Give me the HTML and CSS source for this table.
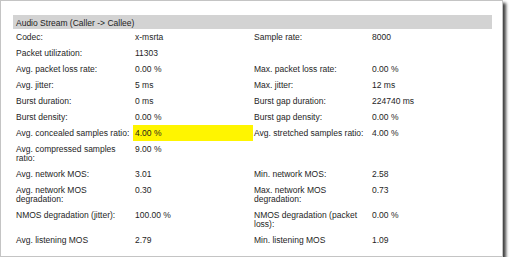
FILE: index.html
```html
<!DOCTYPE html>
<html>
<head>
<meta charset="utf-8">
<link rel="stylesheet" href="styles.css">
</head>
<body>
<div class="frame">
  <table class="stats">
    <colgroup>
      <col class="c1"><col class="c2"><col class="c3"><col class="c4">
    </colgroup>
    <tr class="head"><td colspan="4">Audio Stream (Caller -&gt; Callee)</td></tr>
    <tr><td>Codec:</td><td>x-msrta</td><td>Sample rate:</td><td>8000</td></tr>
    <tr><td>Packet utilization:</td><td>11303</td><td></td><td></td></tr>
    <tr><td>Avg. packet loss rate:</td><td>0.00 %</td><td>Max. packet loss rate:</td><td>0.00 %</td></tr>
    <tr><td>Avg. jitter:</td><td>5 ms</td><td>Max. jitter:</td><td>12 ms</td></tr>
    <tr><td>Burst duration:</td><td>0 ms</td><td>Burst gap duration:</td><td>224740 ms</td></tr>
    <tr><td>Burst density:</td><td>0.00 %</td><td>Burst gap density:</td><td>0.00 %</td></tr>
    <tr><td>Avg. concealed samples ratio:</td><td class="hl">4.00 %</td><td>Avg. stretched samples ratio:</td><td>4.00 %</td></tr>
    <tr><td>Avg. compressed samples ratio:</td><td>9.00 %</td><td></td><td></td></tr>
    <tr><td>Avg. network MOS:</td><td>3.01</td><td>Min. network MOS:</td><td>2.58</td></tr>
    <tr><td>Avg. network MOS degradation:</td><td>0.30</td><td>Max. network MOS degradation:</td><td>0.73</td></tr>
    <tr><td>NMOS degradation (jitter):</td><td>100.00 %</td><td>NMOS degradation (packet loss):</td><td>0.00 %</td></tr>
    <tr><td>Avg. listening MOS</td><td>2.79</td><td>Min. listening MOS</td><td>1.09</td></tr>
  </table>
</div>
</body>
</html>
```

FILE: styles.css
```css
html, body {
  margin: 0;
  padding: 0;
  background: #ffffff;
}
.frame {
  box-sizing: border-box;
  width: 503px;
  height: 257px;
  border: 1px solid #c4c4c4;
  background: #ffffff;
  padding: 14px 0 0 12px;
  box-shadow: 3px 3px 3px rgba(0, 0, 0, 0.75);
}
.stats {
  border-collapse: collapse;
  table-layout: fixed;
  width: 479px;
  font-family: "Liberation Sans", Arial, sans-serif;
  font-size: 8.5px;
  line-height: 9px;
  color: #1e1e1e;
}
.c1 { width: 120px; }
.c2 { width: 120px; }
.c3 { width: 118px; }
.c4 { width: 121px; }
.stats td {
  padding: 3.5px 2px 3.5px 1px;
  vertical-align: top;
}
.stats td:first-child { padding: 3.5px 0 3.5px 3px; }
.stats td:nth-child(2) { padding-left: 2px; }
.stats .head td {
  background: #d3d3d3;
  height: 14px;
  padding: 2px 3px 0 3px;
  box-sizing: border-box;
  vertical-align: middle;
}
.stats td.hl {
  background: #fff500;
}
```
